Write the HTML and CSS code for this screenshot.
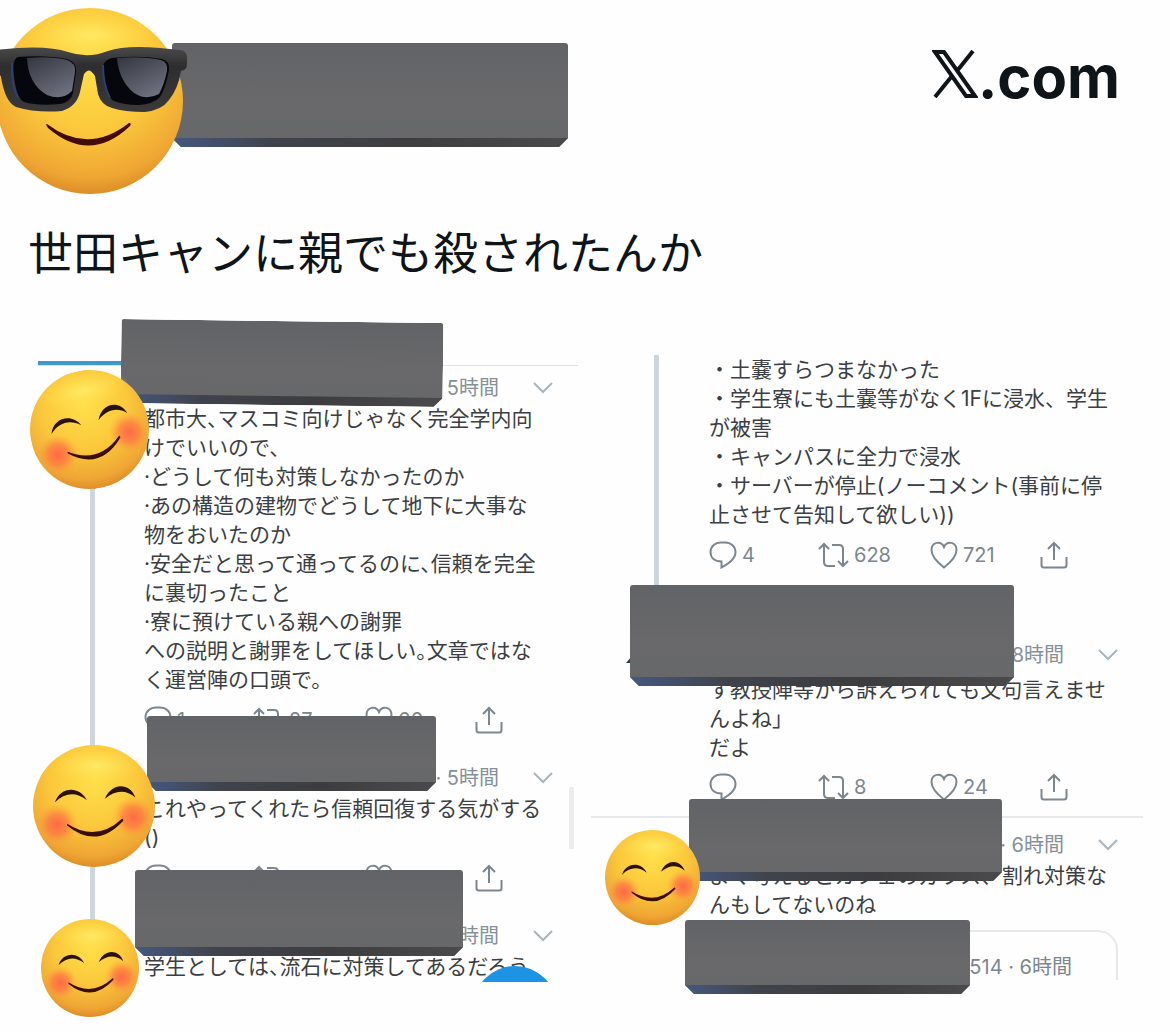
FILE: index.html
```html
<!DOCTYPE html>
<html lang="ja">
  <head>
    <meta charset="utf-8">
    <title>X.com</title>
    <link rel="stylesheet" href="styles.css">
  </head>
  <body>
    <!-- shared icons -->
    <svg class="sprite" aria-hidden="true">
      <defs>
        <radialGradient id="face" cx="50%" cy="30%" r="72%">
          <stop offset="0" stop-color="#ffdf4a"/>
          <stop offset="0.5" stop-color="#fbc83c"/>
          <stop offset="0.85" stop-color="#efa634"/>
          <stop offset="1" stop-color="#d98824"/>
        </radialGradient>
        <radialGradient id="shine">
          <stop offset="0" stop-color="#ffee6e" stop-opacity="0.8"/>
          <stop offset="1" stop-color="#ffe04a" stop-opacity="0"/>
        </radialGradient>
        <radialGradient id="blush">
          <stop offset="0" stop-color="#ff5f48" stop-opacity="0.9"/>
          <stop offset="0.5" stop-color="#ff6a44" stop-opacity="0.6"/>
          <stop offset="1" stop-color="#ff9a40" stop-opacity="0"/>
        </radialGradient>
        <linearGradient id="lens" x1="0" y1="0" x2="0.6" y2="1">
          <stop offset="0" stop-color="#34363f"/>
          <stop offset="1" stop-color="#6c6f7c"/>
        </linearGradient>
        <linearGradient id="frame" x1="0" y1="0" x2="0" y2="1">
          <stop offset="0" stop-color="#4a4a4b"/>
          <stop offset="0.3" stop-color="#2e2d2f"/>
          <stop offset="1" stop-color="#3b3939"/>
        </linearGradient>
      </defs>
      <symbol id="smile" viewBox="0 0 100 100">
        <circle cx="50" cy="50" r="50" fill="url(#face)"/>
        <ellipse cx="52" cy="17" rx="38" ry="15" fill="url(#shine)"/>
        <circle cx="20" cy="65" r="17" fill="url(#blush)"/>
        <circle cx="82" cy="59" r="17" fill="url(#blush)"/>
        <path d="M18 47C22 34 38 33 44 45C35 38 26 39 18 47Z" fill="#2b1208"/>
        <path d="M59 44C64 31 79 30 84 43C76 36 67 37 59 44Z" fill="#2b1208"/>
        <path d="M28 64.500Q52 80 73 60.500Q74 60 74 62Q52 86 28 66Z" fill="#3a0d06"/>
      </symbol>
      <symbol id="reply" viewBox="0 0 28 28">
        <path d="M12 1.500H16C22 1.500 26.500 5.500 26.500 11C26.500 18 20 22 12.500 26.500V20.500C6 20.500 1.500 17 1.500 11C1.500 5.500 6 1.500 12 1.500Z"/>
      </symbol>
      <symbol id="retweet" viewBox="0 0 31 28">
        <path d="M1 8L6 3L11 8M6 3V21Q6 25 10 25H17M14 4H21Q25 4 25 8V25M20 20L25 25L30 20"/>
      </symbol>
      <symbol id="heart" viewBox="0 0 28 28">
        <path d="M14 26.500C7 21 1.500 15.500 1.500 9C1.500 1 11 -1 14 6C17 -1 26.500 1 26.500 9C26.500 15.500 21 21 14 26.500Z"/>
      </symbol>
      <symbol id="share" viewBox="0 0 28 28">
        <path d="M14 19V2M8 8L14 2L20 8M1.500 16V24Q1.500 26.500 4 26.500H24Q26.500 26.500 26.500 24V16"/>
      </symbol>
      <symbol id="chevron" viewBox="0 0 20 12">
        <path d="M1 1L10 10L19 1"/>
      </symbol>
    </svg>

    <header class="header">
      <div class="author">
        <svg class="authorFace" viewBox="0 0 188 190" role="img" aria-label="😎">
          <circle cx="90" cy="94" r="93" fill="url(#face)"/>
          <ellipse cx="90" cy="28" rx="70" ry="24" fill="url(#shine)"/>
          <path d="M-4 43Q45 37 68 45Q88 52 108 44Q125 38 160 41L180 43Q187 44 187 50V57Q187 63 181 64Q178 82 169 93Q162 103 145 105Q124 105 112 101Q101 98 98 87L95 69Q89 59 84 67L80 85Q77 99 62 104Q36 106 16 100Q5 95 1 70L-4 60Z" fill="url(#frame)"/>
          <path d="M18 50Q46 48 67 52Q77 55 76 65L73 86Q71 95 60 97Q38 99 24 95Q16 91 14 68Q12 52 18 50Z" fill="#05070d"/>
          <path d="M112 51Q140 48 162 52Q170 54 169 63Q166 80 160 90Q154 97 138 98Q124 98 114 94Q107 91 104 72Q99 54 112 51Z" fill="#05070d"/>
          <path d="M27 51Q52 49 67 53Q76 56 75 65L72 84Q62 94 47 88Q28 77 27 51Z" fill="url(#lens)"/>
          <path d="M117 51Q142 49 161 53Q168 55 167 64Q164 78 159 87Q146 94 134 86Q119 74 117 51Z" fill="url(#lens)"/>
          <path d="M12 56Q11 78 18 91M103 58Q103 78 110 91" fill="none" stroke="#2c416e" stroke-width="2"/>
          <path d="M47 117Q88 148 129 116Q132 116 130 119Q90 157 48 121Q45 117 47 117Z" fill="#430c06"/>
        </svg>
        <div class="bar authorBar"></div>
      </div>
      <a class="brand" href="#" aria-label="X.com">
        <svg class="brandMark" viewBox="0 0 46 48" aria-hidden="true">
          <path d="M3 2H12L43 46H34ZM41 1L25 21M20 26L3 47"/>
        </svg>
        <span>.com</span>
      </a>
    </header>

    <h1 class="title">世田キャンに親でも殺されたんか</h1>

    <main class="columns">
      <section class="column columnLeft">
        <div class="tabRule"></div>
        <article class="tweet threaded">
          <div class="tweetHead">
            <span>5時間</span>
            <button class="more" aria-label="メニュー"><svg><use href="#chevron"/></svg></button>
          </div>
          <p class="text tight">都市大、マスコミ向けじゃなく完全学内向<br>けでいいので、<br>·どうして何も対策しなかったのか<br>·あの構造の建物でどうして地下に大事な<br>物をおいたのか<br>·安全だと思って通ってるのに、信頼を完全<br>に裏切ったこと<br>·寮に預けている親への謝罪<br>への説明と謝罪をしてほしい。文章ではな<br>く運営陣の口頭で。</p>
          <div class="actions">
            <button aria-label="返信"><svg><use href="#reply"/></svg>1</button>
            <button aria-label="リツイート"><svg class="wide"><use href="#retweet"/></svg>27</button>
            <button aria-label="いいね"><svg><use href="#heart"/></svg>66</button>
            <button aria-label="共有"><svg><use href="#share"/></svg></button>
          </div>
          <div class="bar bar1"></div>
          <svg class="face face1"><use href="#smile"/></svg>
        </article>

        <article class="tweet threaded">
          <div class="tweetHead">
            <span>· 5時間</span>
            <button class="more" aria-label="メニュー"><svg><use href="#chevron"/></svg></button>
          </div>
          <p class="text tight">これやってくれたら信頼回復する気がする<br>()</p>
          <div class="actions">
            <button aria-label="返信"><svg><use href="#reply"/></svg>2</button>
            <button aria-label="リツイート"><svg class="wide"><use href="#retweet"/></svg></button>
            <button aria-label="いいね"><svg><use href="#heart"/></svg>5</button>
            <button aria-label="共有"><svg><use href="#share"/></svg></button>
          </div>
          <div class="bar bar2"></div>
          <svg class="face face2"><use href="#smile"/></svg>
          <div class="scrollThumb"></div>
        </article>

        <article class="tweet last">
          <div class="tweetHead">
            <span>5時間</span>
            <button class="more" aria-label="メニュー"><svg><use href="#chevron"/></svg></button>
          </div>
          <p class="text tight">学生としては、流石に対策してあるだろう</p>
          <svg class="compose" viewBox="0 0 66 16"><circle cx="33" cy="42" r="42"/></svg>
          <div class="bar bar3"></div>
          <svg class="face face3"><use href="#smile"/></svg>
        </article>
      </section>

      <section class="column columnRight">
        <article class="tweet threaded hiddenHead">
          <p class="text">・土嚢すらつまなかった<br>・学生寮にも土嚢等がなく1Fに浸水、学生<br>が被害<br>・キャンパスに全力で浸水<br>・サーバーが停止(ノーコメント(事前に停<br>止させて告知して欲しい))</p>
          <div class="actions">
            <button aria-label="返信"><svg><use href="#reply"/></svg>4</button>
            <button aria-label="リツイート"><svg class="wide"><use href="#retweet"/></svg>628</button>
            <button aria-label="いいね"><svg><use href="#heart"/></svg>721</button>
            <button aria-label="共有"><svg><use href="#share"/></svg></button>
          </div>
        </article>

        <article class="tweet reply">
          <div class="tweetHead">
            <span>8時間</span>
            <button class="more" aria-label="メニュー"><svg><use href="#chevron"/></svg></button>
          </div>
          <p class="text tight">す教授陣等から訴えられても文句言えませ<br>んよね」<br>だよ</p>
          <div class="actions">
            <button aria-label="返信"><svg><use href="#reply"/></svg></button>
            <button aria-label="リツイート"><svg class="wide"><use href="#retweet"/></svg>8</button>
            <button aria-label="いいね"><svg><use href="#heart"/></svg>24</button>
            <button aria-label="共有"><svg><use href="#share"/></svg></button>
          </div>
          <svg class="avatarTip" viewBox="0 0 6 7"><path d="M6 0V7H0Z"/></svg>
          <div class="bar bar4"></div>
        </article>

        <article class="tweet separated last">
          <div class="tweetHead">
            <span>· 6時間</span>
            <button class="more" aria-label="メニュー"><svg><use href="#chevron"/></svg></button>
          </div>
          <p class="text">よく考えるとカフェのガラス、割れ対策な<br>んもしてないのね</p>
          <div class="quote">514 · 6時間</div>
          <div class="bar bar5"></div>
          <div class="bar bar6"></div>
          <svg class="face face4"><use href="#smile"/></svg>
        </article>
      </section>
    </main>
  </body>
</html>
```

FILE: styles.css
```css
body {
  margin: 0;
  background-color: #fefefe;
  color: #0f1419;
  font-family: Inter, "Noto Sans CJK JP", sans-serif;
}
button {
  padding: 0;
  border: none;
  background: none;
  color: inherit;
  font: inherit;
}
.sprite {
  position: absolute;
  width: 0;
  height: 0;
}

/* header */
.header {
  display: flex;
  justify-content: space-between;
  align-items: flex-start;
  padding: 7px 50px 0 0;
}
.author {
  display: flex;
  align-items: flex-start;
}
.authorFace {
  width: 188px;
  height: 190px;
  z-index: 1;
}
.authorBar {
  width: 396px;
  height: 104px;
  margin: 36px 0 0 -16px;
}
.brand {
  display: flex;
  align-items: baseline;
  margin-top: 34px;
  color: #0f1419;
  font-size: 58px;
  font-weight: 700;
  line-height: 72px;
  text-decoration: none;
}
.brandMark {
  width: 46px;
  height: 48px;
  fill: none;
  stroke: #0f1419;
  stroke-width: 4;
}
.title {
  margin: 24px 28px 0;
  font-size: 45px;
  font-weight: 400;
  line-height: 66px;
}

/* blocks that cover the names */
.bar {
  background: linear-gradient(to bottom, #626366, #69696b 60%, #666769);
  clip-path: polygon(0 0, 100% 0, 100% calc(100% - 9px), calc(100% - 9px) 100%, 9px 100%, 0 calc(100% - 9px));
  border-radius: 3px;
}
.bar::after {
  content: "";
  display: block;
  height: 100%;
  background: linear-gradient(to right, #45587f, #40434c 25%, #3d3d3f 60%, #4a4a4c) bottom / 100% 9px no-repeat;
}

/* columns */
.columns {
  display: grid;
  grid-template-columns: minmax(0, 540fr) minmax(0, 552fr);
  gap: 13px;
  padding: 68px 27px 50px 38px;
}
.columnLeft {
  --inset: 106px;
  --thread: 52px;
  padding-top: 6px;
}
.columnRight {
  --inset: 118px;
  --thread: 63px;
}
.tabRule {
  height: 4px;
  margin-bottom: 7px;
  border-bottom: 1px solid #dfe3e6;
  background: linear-gradient(#3f97cb, #3f97cb) left / 90px 4px no-repeat;
}
.tweet {
  position: relative;
  padding: 0 25px 28px var(--inset);
}
.threaded::before {
  content: "";
  position: absolute;
  left: var(--thread);
  top: 0;
  bottom: 0;
  width: 5px;
  background-color: #ccd6dd;
}
.hiddenHead {
  padding-bottom: 70px;
}
.reply {
  padding-bottom: 14px;
}
.separated {
  padding-top: 14px;
}
.separated::before {
  content: "";
  position: absolute;
  left: 0;
  right: 0;
  top: 0;
  height: 2px;
  background-color: #e6e9ec;
}
.last {
  padding-bottom: 0;
}
.tweetHead {
  display: flex;
  justify-content: flex-end;
  align-items: center;
  gap: 34px;
  margin-bottom: 1px;
  color: #84909a;
  font-size: 20px;
  line-height: 30px;
}
.reply .tweetHead {
  margin-bottom: 5px;
}
.more {
  display: flex;
}
.more svg {
  width: 20px;
  height: 12px;
  fill: none;
  stroke: #aab4bc;
  stroke-width: 2;
}
.text {
  margin: 0;
  color: #3b3e42;
  font-size: 21px;
  line-height: 29px;
  white-space: nowrap;
}
.tight {
  font-feature-settings: "halt";
}
.actions {
  display: grid;
  grid-template-columns: 109px 112px 110px auto;
  margin-top: 11px;
  color: #7b868f;
  font-size: 20px;
  line-height: 30px;
}
.actions button {
  display: flex;
  align-items: center;
  gap: 5px;
  height: 30px;
}
.actions svg {
  width: 28px;
  height: 28px;
  fill: none;
  stroke: #7b868f;
  stroke-width: 2;
}
.actions .wide {
  width: 31px;
}
.reply .actions {
  margin-top: 10px;
}
.quote {
  height: 28px;
  margin-top: 11px;
  padding: 20px 44px 0 0;
  border: 2px solid #e6e9ec;
  border-bottom: none;
  border-radius: 20px 20px 0 0;
  color: #7b868f;
  font-size: 20px;
  line-height: 30px;
  text-align: right;
}

/* stickers laid over the tweets */
.tweet .bar,
.face,
.scrollThumb,
.compose,
.avatarTip {
  position: absolute;
}
.bar1 {
  left: 83px;
  top: -52px;
  width: 322px;
  height: 84px;
  transform: rotate(0.7deg);
}
.bar2 {
  left: 109px;
  top: -47px;
  width: 289px;
  height: 75px;
}
.bar3 {
  left: 97px;
  top: -51px;
  width: 328px;
  height: 86px;
}
.bar4 {
  left: 39px;
  top: -55px;
  width: 384px;
  height: 101px;
}
.bar5 {
  left: 98px;
  top: -17px;
  width: 313px;
  height: 82px;
}
.bar6 {
  left: 94px;
  top: 104px;
  width: 285px;
  height: 74px;
}
.face1 {
  left: -8px;
  top: -3px;
  width: 119px;
  height: 119px;
  transform: rotate(-12deg);
}
.face2 {
  left: -5px;
  top: -18px;
  width: 122px;
  height: 122px;
}
.face3 {
  left: 3px;
  top: -2px;
  width: 98px;
  height: 98px;
}
.face4 {
  left: 14px;
  top: 14px;
  width: 95px;
  height: 95px;
}
.scrollThumb {
  right: 4px;
  top: 24px;
  width: 5px;
  height: 62px;
  background-color: #ececee;
}
.compose {
  right: 30px;
  bottom: -1px;
  width: 66px;
  height: 16px;
  fill: #1c93e3;
}
.avatarTip {
  left: 35px;
  top: 16px;
  width: 6px;
  height: 7px;
  fill: #2f3f4c;
}
```
